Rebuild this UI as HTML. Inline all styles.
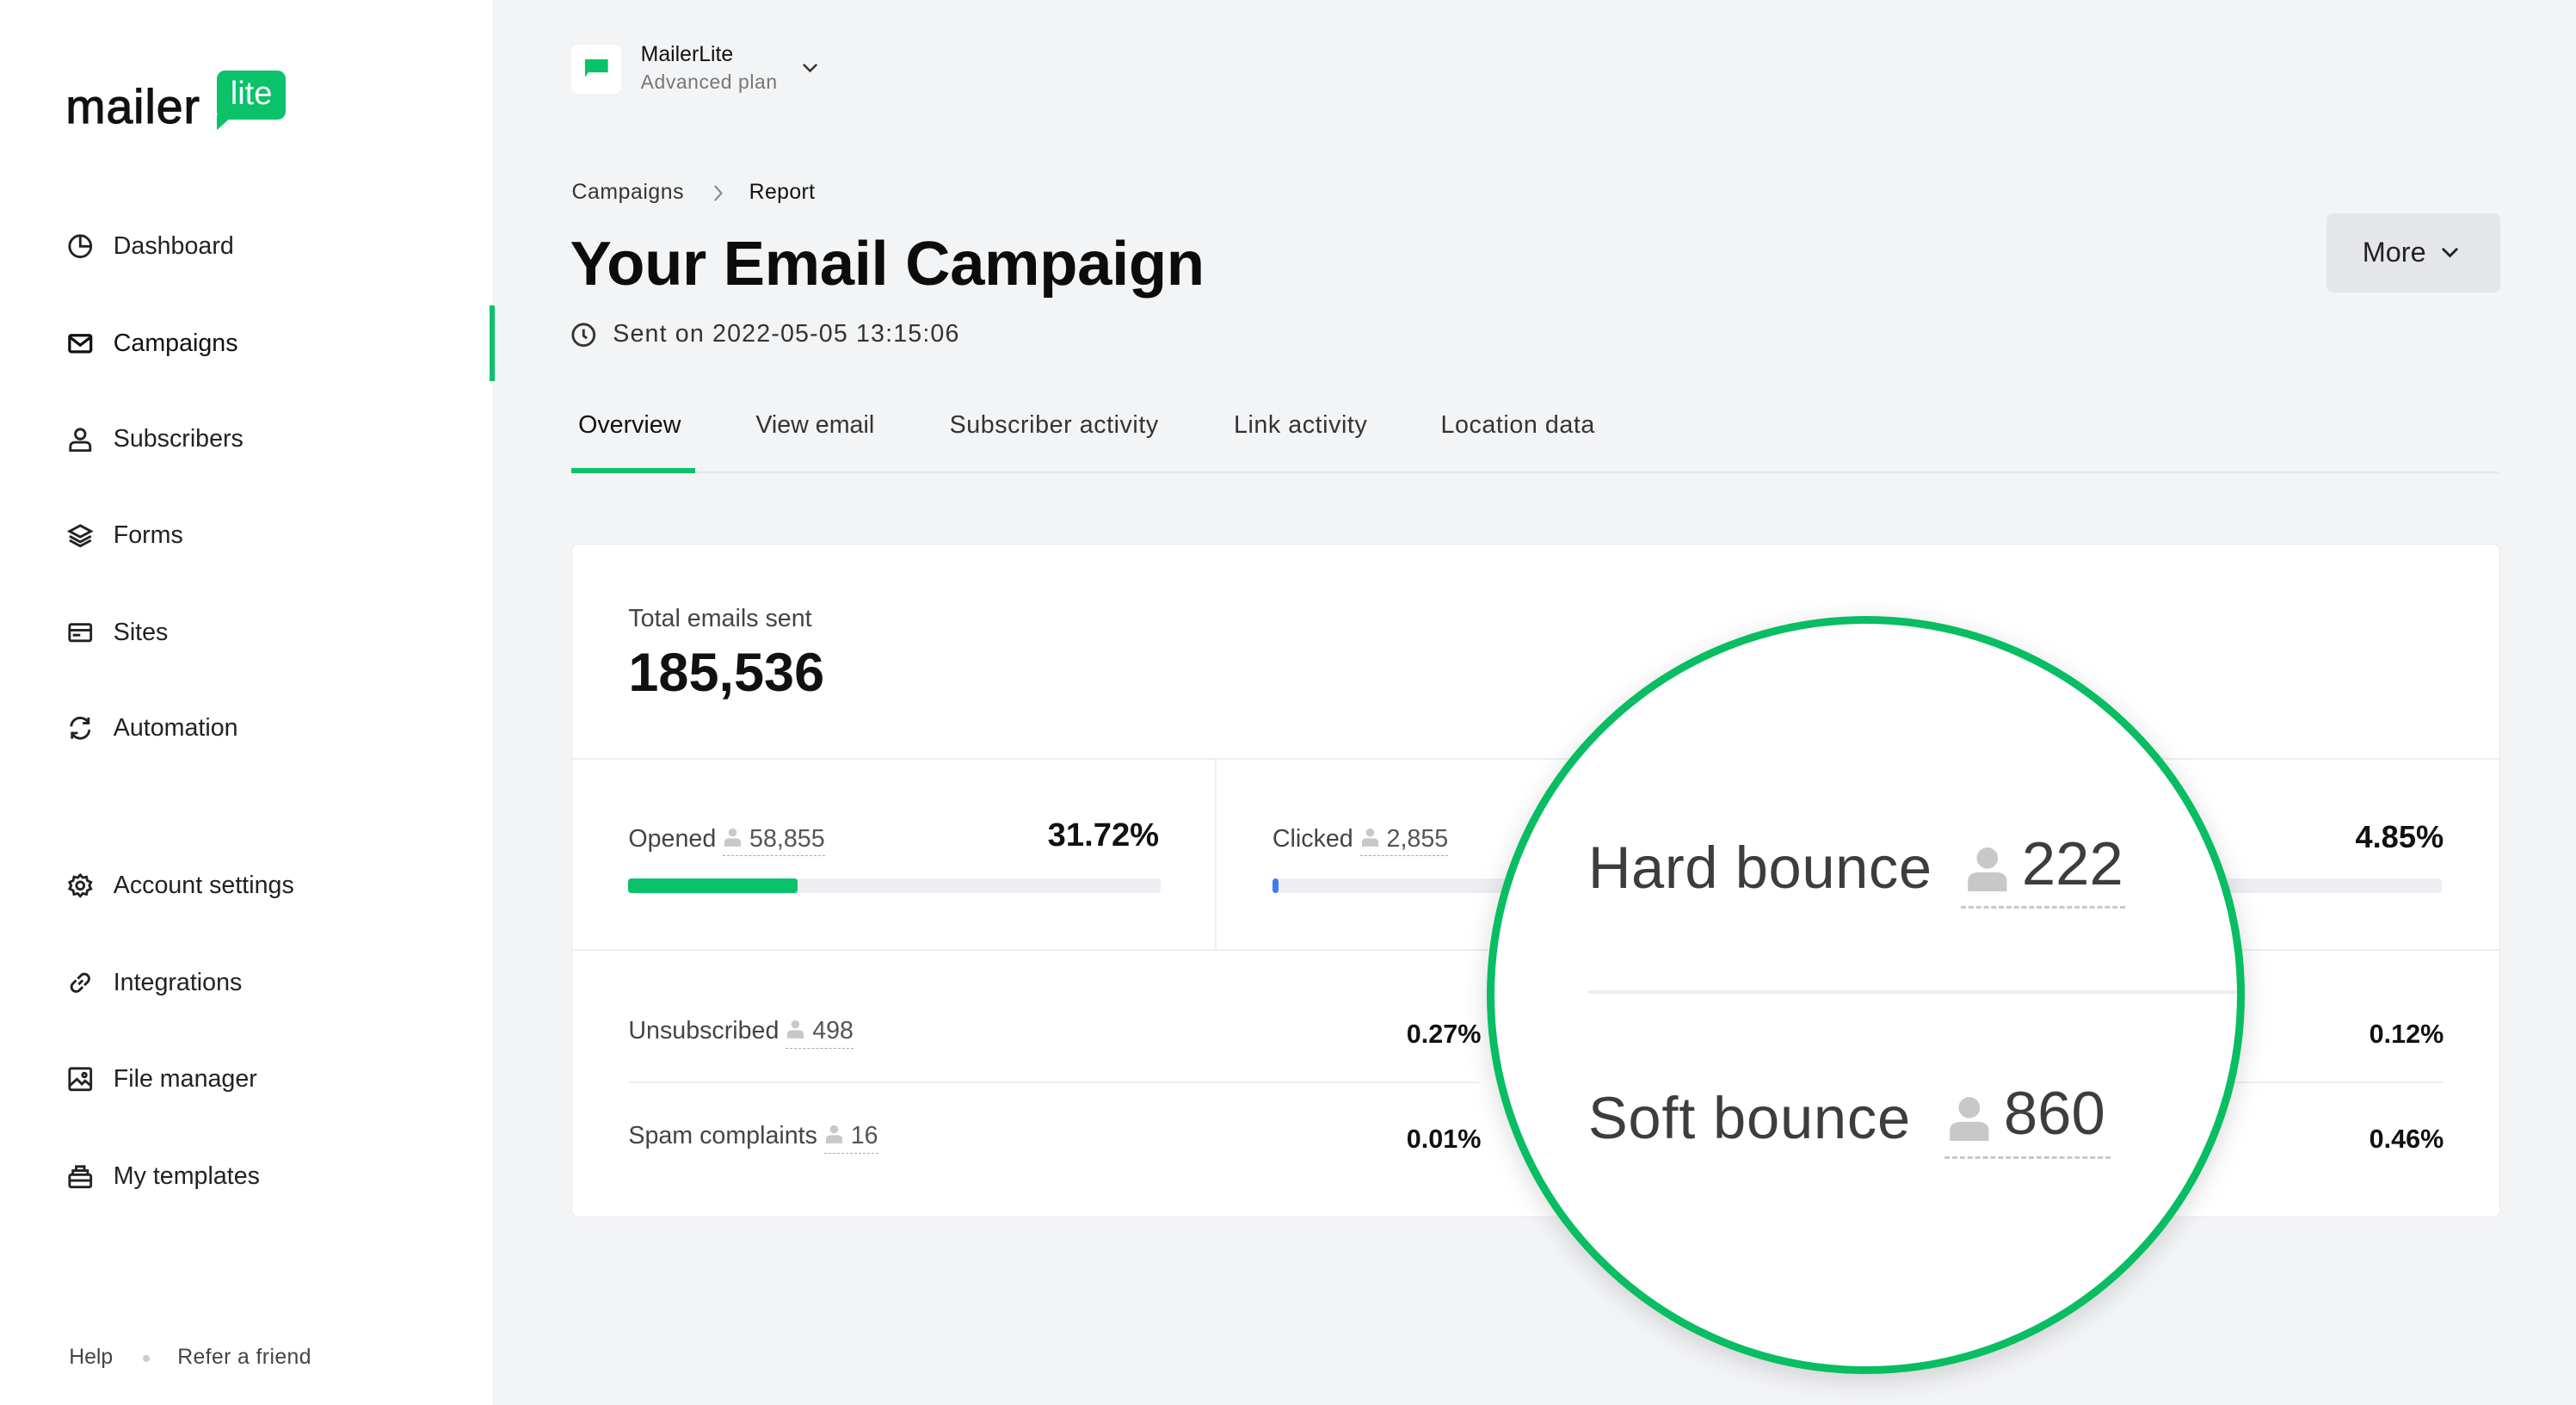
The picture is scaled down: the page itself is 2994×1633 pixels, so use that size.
<!DOCTYPE html>
<html><head><meta charset="utf-8"><style>
html{zoom:1.9094}
body{margin:0;width:1568px;height:855px;position:relative;overflow:hidden;background:#f3f4f6;font-family:"Liberation Sans",sans-serif;color:#111}
.a{position:absolute;white-space:nowrap}
.side{position:absolute;left:0;top:0;width:300px;height:855px;background:#fff;border-right:1px solid #ececec}
.nav{position:absolute;left:69px;font-size:15px;color:#222;line-height:18px}
.ic{position:absolute;left:41px;width:16px;height:16px}
.tab{position:absolute;top:250px;font-size:15px;color:#333;line-height:18px}
.card{position:absolute;left:348px;top:331px;width:1173px;height:409px;background:#fff;border:1px solid #e8e9ec;border-radius:4px}
.lbl{font-size:15px;color:#444;line-height:18px}
.num{color:#555;border-bottom:1px dashed #aaa;padding-bottom:2px}
.pct{font-size:17px;font-weight:bold;line-height:20px}
.bar{position:absolute;height:9px;background:#eceef1;border-radius:2px}
</style></head><body>
<div class="side">
 <div class="a" style="left:40px;top:48px;font-size:29px;font-weight:normal;-webkit-text-stroke:0.6px #111;letter-spacing:0.5px">mailer</div>
 <div class="a" style="left:132px;top:43px;width:42px;height:30px;background:#09c269;border-radius:5px;color:#fff;font-size:20px;line-height:28px;text-align:center">lite</div>
 <svg class="a" style="left:132px;top:70px" width="10" height="10"><path d="M0 0H10L0 9Z" fill="#09c269"/></svg>

 <svg class="ic" style="top:142px" viewBox="0 0 16 16" fill="none" stroke="#222" stroke-width="1.5"><circle cx="8" cy="8" r="6.5"/><path d="M8 1.5V8H14.5"/></svg>
 <div class="nav" style="top:141px">Dashboard</div>
 <svg class="ic" style="top:201px" viewBox="0 0 16 16" fill="none" stroke="#111" stroke-width="1.7"><rect x="1.5" y="3" width="13" height="10" rx="1"/><path d="M1.5 4L8 9L14.5 4"/></svg>
 <div class="nav" style="top:200px;color:#111">Campaigns</div>
 <div class="a" style="left:298px;top:186px;width:3px;height:46px;background:#09c269"></div>
 <svg class="ic" style="top:259px" viewBox="0 0 16 16" fill="none" stroke="#222" stroke-width="1.5"><circle cx="8" cy="5" r="3"/><path d="M2 15V12.5C2 11 3 10 5 10H11C13 10 14 11 14 12.5V15Z"/></svg>
 <div class="nav" style="top:258px">Subscribers</div>
 <svg class="ic" style="top:318px" viewBox="0 0 16 16" fill="none" stroke="#222" stroke-width="1.5"><path d="M8 2L14.5 5.5L8 9L1.5 5.5Z M1.5 8.5L8 12L14.5 8.5 M1.5 11L8 14.5L14.5 11"/></svg>
 <div class="nav" style="top:317px">Forms</div>
 <svg class="ic" style="top:377px" viewBox="0 0 16 16" fill="none" stroke="#222" stroke-width="1.5"><rect x="1.5" y="3" width="13" height="10" rx="1"/><path d="M1.5 6.5H14.5M3.5 9.5H8"/></svg>
 <div class="nav" style="top:376px">Sites</div>
 <svg class="ic" style="top:435px" viewBox="0 0 16 16" fill="none" stroke="#222" stroke-width="1.5"><path d="M2.5 7A5.5 5.5 0 0 1 13 5M13.5 9A5.5 5.5 0 0 1 3 11M13 1.5V5H9.5M3 14.5V11H6.5"/></svg>
 <div class="nav" style="top:434px">Automation</div>
 <svg class="ic" style="top:531px" viewBox="0 0 16 16" fill="none" stroke="#222" stroke-width="1.5"><circle cx="8" cy="8" r="2.3"/><path d="M8 1.5L9.5 3.2L11.8 2.7L12.3 5L14.5 6L13.5 8L14.5 10L12.3 11L11.8 13.3L9.5 12.8L8 14.5L6.5 12.8L4.2 13.3L3.7 11L1.5 10L2.5 8L1.5 6L3.7 5L4.2 2.7L6.5 3.2Z"/></svg>
 <div class="nav" style="top:530px">Account settings</div>
 <svg class="ic" style="top:590px" viewBox="0 0 16 16" fill="none" stroke="#222" stroke-width="1.5"><path d="M7 9L9.5 6.5M6.5 5.5L8.5 3.5A2.8 2.8 0 0 1 12.5 7.5L10.5 9.5M9.5 10.5L7.5 12.5A2.8 2.8 0 0 1 3.5 8.5L5.5 6.5"/></svg>
 <div class="nav" style="top:589px">Integrations</div>
 <svg class="ic" style="top:649px" viewBox="0 0 16 16" fill="none" stroke="#222" stroke-width="1.5"><rect x="1.5" y="1.5" width="13" height="13" rx="1"/><path d="M1.5 12L6 8L9 11L11 9L14.5 12"/><circle cx="10.5" cy="5.5" r="1.2"/></svg>
 <div class="nav" style="top:648px">File manager</div>
 <svg class="ic" style="top:708px" viewBox="0 0 16 16" fill="none" stroke="#222" stroke-width="1.5"><rect x="1.5" y="7" width="13" height="7.5" rx="1"/><path d="M3.5 7V4.5H12.5V7M5.5 4.5V2H10.5V4.5M1.5 10.5H14.5"/></svg>
 <div class="nav" style="top:707px">My templates</div>
 <div class="a" style="left:42px;top:819px;font-size:13px;color:#444">Help</div>
 <div class="a" style="left:87px;top:825px;width:4px;height:4px;border-radius:2px;background:#ccc"></div>
 <div class="a" style="left:108px;top:819px;font-size:13px;color:#444;letter-spacing:0.2px">Refer a friend</div>
</div>

<div class="a" style="left:348px;top:27px;width:30px;height:30px;background:#fff;border-radius:4px"></div>
<svg class="a" style="left:355px;top:35px" width="16" height="14"><path d="M1 1H15V9H3L1 12Z" fill="#09c269"/></svg>
<div class="a" style="left:390px;top:26px;font-size:13px;color:#111">MailerLite</div>
<div class="a" style="left:390px;top:43px;font-size:12px;color:#777;letter-spacing:0.3px">Advanced plan</div>
<svg class="a" style="left:488px;top:38px" width="10" height="7"><path d="M1 1L5 5L9 1" stroke="#333" stroke-width="1.3" fill="none"/></svg>

<div class="a" style="left:348px;top:110px;font-size:13px;color:#333;letter-spacing:0.3px">Campaigns</div>
<svg class="a" style="left:433px;top:112px" width="8" height="11"><path d="M2 1L6 5.5L2 10" stroke="#888" stroke-width="1.1" fill="none"/></svg>
<div class="a" style="left:456px;top:110px;font-size:13px;color:#111;letter-spacing:0.2px">Report</div>
<div class="a" style="left:347px;top:139px;font-size:38px;font-weight:bold;line-height:44px;color:#0c0c0c;letter-spacing:-0.2px">Your Email Campaign</div>
<svg class="a" style="left:347px;top:196px" width="16" height="16" viewBox="0 0 16 16" fill="none" stroke="#333" stroke-width="1.5"><circle cx="8" cy="8" r="6.5"/><path d="M8 4.5V8.5L10 10"/></svg>
<div class="a" style="left:373px;top:195px;font-size:15px;color:#333;letter-spacing:0.6px">Sent on 2022-05-05 13:15:06</div>
<div class="a" style="left:1416px;top:130px;width:106px;height:48px;background:#e4e6e9;border-radius:4px"></div>
<div class="a" style="left:1438px;top:144px;font-size:17px;color:#222">More</div>
<svg class="a" style="left:1486px;top:150px" width="11" height="8"><path d="M1 1.5L5.5 6L10 1.5" stroke="#222" stroke-width="1.5" fill="none"/></svg>

<div class="tab" style="left:352px;color:#111">Overview</div>
<div class="tab" style="left:460px">View email</div>
<div class="tab" style="left:578px;letter-spacing:0.3px">Subscriber activity</div>
<div class="tab" style="left:751px;letter-spacing:0.3px">Link activity</div>
<div class="tab" style="left:877px;letter-spacing:0.3px">Location data</div>
<div class="a" style="left:348px;top:287px;width:1173px;height:1px;background:#e3e5e8"></div>
<div class="a" style="left:348px;top:285px;width:75px;height:3px;background:#09c269"></div>

<div class="card">
 <div class="a lbl" style="left:34px;top:36px">Total emails sent</div>
 <div class="a" style="left:34px;top:58px;font-size:33px;font-weight:bold;line-height:40px">185,536</div>
 <div class="a" style="left:0;top:130px;width:1173px;height:1px;background:#eceef0"></div>
 <div class="a" style="left:391px;top:131px;width:1px;height:116px;background:#eceef0"></div>
 <div class="a" style="left:0;top:246px;width:1173px;height:1px;background:#eceef0"></div>

 <div class="a lbl" style="left:34px;top:170px">Opened <span class="num"><svg width="12" height="12" viewBox="0 0 12 12"><circle cx="6" cy="3.5" r="2.5" fill="#c8c8c8"/><path d="M1 12V9.5C1 8 2 7 4 7H8C10 7 11 8 11 9.5V12Z" fill="#c8c8c8"/></svg> 58,855</span></div>
 <div class="a pct" style="right:816px;top:167px;font-size:20px">31.72%</div>
 <div class="bar" style="left:34px;top:203px;width:324px"></div>
 <div class="bar" style="left:34px;top:203px;width:103px;background:#09c269"></div>
 <div class="a lbl" style="left:426px;top:170px">Clicked <span class="num"><svg width="12" height="12" viewBox="0 0 12 12"><circle cx="6" cy="3.5" r="2.5" fill="#c8c8c8"/><path d="M1 12V9.5C1 8 2 7 4 7H8C10 7 11 8 11 9.5V12Z" fill="#c8c8c8"/></svg> 2,855</span></div>
 <div class="bar" style="left:426px;top:203px;width:712px"></div>
 <div class="bar" style="left:426px;top:203px;width:4px;background:#3b7ded"></div>
 <div class="a pct" style="right:34px;top:168px;font-size:19px">4.85%</div>

 <div class="a lbl" style="left:34px;top:287px">Unsubscribed <span class="num"><svg width="12" height="12" viewBox="0 0 12 12"><circle cx="6" cy="3.5" r="2.5" fill="#c8c8c8"/><path d="M1 12V9.5C1 8 2 7 4 7H8C10 7 11 8 11 9.5V12Z" fill="#c8c8c8"/></svg> 498</span></div>
 <div class="a pct" style="right:620px;top:288px;font-size:16px">0.27%</div>
 <div class="a" style="left:34px;top:327px;width:518px;height:1px;background:#eceef0"></div>
 <div class="a" style="left:1000px;top:327px;width:139px;height:1px;background:#eceef0"></div>
 <div class="a lbl" style="left:34px;top:351px">Spam complaints <span class="num"><svg width="12" height="12" viewBox="0 0 12 12"><circle cx="6" cy="3.5" r="2.5" fill="#c8c8c8"/><path d="M1 12V9.5C1 8 2 7 4 7H8C10 7 11 8 11 9.5V12Z" fill="#c8c8c8"/></svg> 16</span></div>
 <div class="a pct" style="right:620px;top:352px;font-size:16px">0.01%</div>
 <div class="a pct" style="right:34px;top:288px;font-size:16px">0.12%</div>
 <div class="a pct" style="right:34px;top:352px;font-size:16px">0.46%</div>
</div>

<div class="a" style="left:905px;top:375px;width:452px;height:452px;border-radius:50%;border:5px solid #08bd62;background:#fff;box-shadow:0 4px 16px rgba(0,0,0,0.15);overflow:hidden">
 <div class="a" style="left:57px;top:128px;font-size:36px;color:#3d3d3d;line-height:42px;letter-spacing:0.3px">Hard bounce</div>
 <svg class="a" style="left:287px;top:135px" width="26" height="28" viewBox="0 0 12 13"><circle cx="6" cy="3.5" r="3" fill="#c8c8c8"/><path d="M0.5 13V10C0.5 8.5 1.5 7.5 3.5 7.5H8.5C10.5 7.5 11.5 8.5 11.5 10V13Z" fill="#c8c8c8"/></svg>
 <div class="a" style="left:321px;top:125px;font-size:37px;color:#3d3d3d;line-height:42px">222</div>
 <div class="a" style="left:284px;top:172px;width:100px;border-top:2px dashed #c8c8c8"></div>
 <div class="a" style="left:57px;top:223px;width:400px;height:2px;background:#eceef0"></div>
 <div class="a" style="left:57px;top:280px;font-size:36px;color:#3d3d3d;line-height:42px;letter-spacing:0.4px">Soft bounce</div>
 <svg class="a" style="left:276px;top:287px" width="26" height="28" viewBox="0 0 12 13"><circle cx="6" cy="3.5" r="3" fill="#c8c8c8"/><path d="M0.5 13V10C0.5 8.5 1.5 7.5 3.5 7.5H8.5C10.5 7.5 11.5 8.5 11.5 10V13Z" fill="#c8c8c8"/></svg>
 <div class="a" style="left:310px;top:277px;font-size:37px;color:#3d3d3d;line-height:42px">860</div>
 <div class="a" style="left:274px;top:324px;width:101px;border-top:2px dashed #c8c8c8"></div>
</div>
</body></html>
